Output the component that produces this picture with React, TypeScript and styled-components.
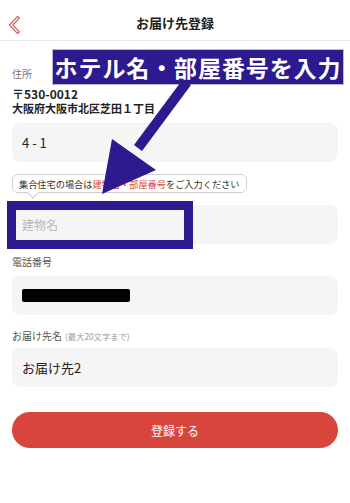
import React from "react";
import styled, { createGlobalStyle } from "styled-components";

const Global = createGlobalStyle`
  html, body { margin: 0; padding: 0; background: #fff; }
  body { font-family: "Noto Sans CJK JP", "Noto Sans", sans-serif; color: #222; }
  * { box-sizing: border-box; }
`;

const NAVY = "#2c1a8e";

const Page = styled.div`
  position: relative;
  width: 350px;
  height: 503px;
  overflow: hidden;
  background: #fff;
`;

const Header = styled.header`
  height: 41px;
  border-bottom: 1px solid #ececec;
  display: flex;
  align-items: center;
  justify-content: center;
  position: relative;
`;

const BackBtn = styled.div`
  position: absolute;
  left: 6px;
  top: 14px;
  width: 18px;
  height: 22px;
  display: flex;
`;

const Title = styled.h1`
  margin: 0;
  font-size: 13px;
  font-weight: 700;
  color: #222;
  margin-top: 4px;
`;

const Form = styled.div`
  display: flex;
  flex-direction: column;
  padding: 0 12px;
`;

const Label = styled.div<{ $top: number; $color?: string }>`
  font-size: 10px;
  color: ${(p) => p.$color || "#666"};
  margin-top: ${(p) => p.$top}px;
  line-height: 14px;
  height: 14px;
  white-space: nowrap;
`;

const Small = styled.span`
  font-size: 8.3px;
  color: #999;
  margin-left: 3px;
`;

const Address = styled.div`
  margin-top: 5px;
  font-weight: 700;
  color: #222;
  display: flex;
  flex-direction: column;
`;

const Zip = styled.div`
  font-size: 12px;
  line-height: 15px;
`;

const AddrLine = styled.div`
  font-size: 11px;
  line-height: 14px;
`;

const Field = styled.div<{ $top: number }>`
  margin-top: ${(p) => p.$top}px;
  height: 39px;
  border-radius: 8px;
  background: #f5f5f5;
  display: flex;
  align-items: center;
  padding: 0 10px;
  font-size: 13px;
  color: #222;
`;

const Placeholder = styled.span`
  color: #b8b8b8;
  font-size: 12px;
`;

const Redacted = styled.div`
  width: 108px;
  height: 13px;
  background: #000;
  border-radius: 2px;
`;

const Tooltip = styled.div`
  position: relative;
  margin-top: 12px;
  align-self: flex-start;
  height: 19px;
  padding: 0 6px 0 6px;
  border: 1px solid #cfcfcf;
  border-radius: 6px;
  background: #fff;
  font-size: 9.2px;
  display: flex;
  align-items: center;
  color: #333;
  white-space: nowrap;
  &::after {
    content: "";
    position: absolute;
    left: 16px;
    bottom: -5px;
    width: 7px;
    height: 7px;
    background: #fff;
    border-right: 1px solid #cfcfcf;
    border-bottom: 1px solid #cfcfcf;
    transform: rotate(45deg);
  }
`;

const Red = styled.span`
  color: #e0453b;
`;

const SubmitButton = styled.button`
  margin-top: 25px;
  height: 36px;
  border: none;
  border-radius: 18px;
  background: #d8453c;
  color: #fff;
  font-family: inherit;
  font-size: 12px;
`;

const Callout = styled.div`
  position: absolute;
  left: 52px;
  top: 49px;
  width: 292px;
  height: 36px;
  background: ${NAVY};
  border: 1px solid #b9b9c9;
  color: #fff;
  font-size: 23px;
  font-weight: 700;
  letter-spacing: 0.9px;
  display: flex;
  align-items: center;
  justify-content: center;
  white-space: nowrap;
`;

const Frame = styled.div`
  position: absolute;
  left: 7px;
  top: 201px;
  width: 186px;
  height: 48px;
  border: 9px solid ${NAVY};
`;

const ArrowSvg = styled.svg`
  position: absolute;
  left: 0;
  top: 0;
  pointer-events: none;
`;

export default function App() {
  return (
    <Page>
      <Global />
      <Header>
        <BackBtn>
          <svg width="18" height="22" viewBox="0 0 18 22">
            <path
              d="M11.5 2.5 L3.5 11 L11.5 19.5 L13.5 18 L6.8 11 L13.5 4 Z"
              fill="none"
              stroke="#d6615c"
              strokeWidth="1.1"
              strokeLinejoin="round"
            />
          </svg>
        </BackBtn>
        <Title>お届け先登録</Title>
      </Header>
      <Form>
        <Label $top={26} $color="#777">住所</Label>
        <Address>
          <Zip>〒530-0012</Zip>
          <AddrLine>大阪府大阪市北区芝田１丁目</AddrLine>
        </Address>
        <Field $top={8}>4 - 1</Field>
        <Tooltip>
          集合住宅の場合は<Red>建物名・部屋番号</Red>をご入力ください
        </Tooltip>
        <Field $top={12}>
          <Placeholder>建物名</Placeholder>
        </Field>
        <Label $top={11} $color="#555">電話番号</Label>
        <Field $top={7}>
          <Redacted />
        </Field>
        <Label $top={14} $color="#555">
          お届け先名<Small>(最大20文字まで)</Small>
        </Label>
        <Field $top={5}>お届け先2</Field>
        <SubmitButton>登録する</SubmitButton>
      </Form>
      <Callout>ホテル名・部屋番号を入力</Callout>
      <Frame />
      <ArrowSvg width="350" height="503" viewBox="0 0 350 503">
        <line x1="187" y1="82" x2="138" y2="148" stroke={NAVY} strokeWidth="10" />
        <polygon points="102,194 112,139 156,170" fill={NAVY} />
      </ArrowSvg>
    </Page>
  );
}
